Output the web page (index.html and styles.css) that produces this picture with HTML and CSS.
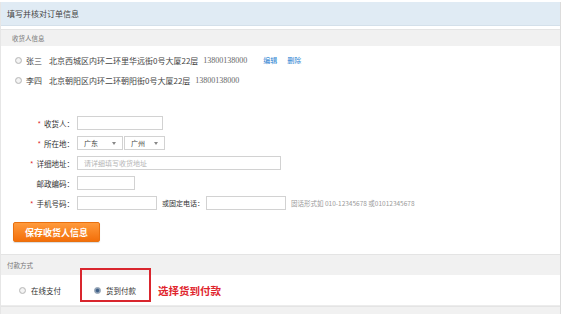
FILE: index.html
```html
<!DOCTYPE html>
<html lang="zh-CN">
<head>
    <meta charset="UTF-8">
    <title>填写并核对订单信息</title>
    <link rel="stylesheet" href="styles.css">
</head>
<body>

<div class="order">
    <div class="order-title">填写并核对订单信息</div>

    <div class="section-title first">收货人信息</div>

    <ul class="address-list">
        <li>
            <span class="radio"></span>
            <span class="name">张三</span>
            <span class="addr">北京西城区内环二环里华远街0号大厦22层</span>
            <span class="phone">13800138000</span>
            <a href="#" class="op">编辑</a>
            <a href="#" class="op">删除</a>
        </li>
        <li>
            <span class="radio"></span>
            <span class="name">李四</span>
            <span class="addr">北京朝阳区内环二环朝阳街0号大厦22层</span>
            <span class="phone">13800138000</span>
        </li>
    </ul>

    <form class="consignee">
        <div class="row">
            <label class="req">收货人：</label>
            <input type="text" class="w-name">
        </div>
        <div class="row">
            <label class="req">所在地：</label>
            <div class="select w-prov">广东<i class="arrow"></i></div>
            <div class="select w-city">广州<i class="arrow"></i></div>
        </div>
        <div class="row">
            <label class="req">详细地址：</label>
            <input type="text" class="w-addr" placeholder="请详细填写收货地址">
        </div>
        <div class="row">
            <label>邮政编码：</label>
            <input type="text" class="w-zip">
        </div>
        <div class="row">
            <label class="req">手机号码：</label>
            <input type="text" class="w-mobile">
            <span class="tel-label">或固定电话：</span>
            <input type="text" class="w-mobile">
            <span class="hint">固话形式如 010-12345678 或01012345678</span>
        </div>
        <button type="button" class="save-btn">保存收货人信息</button>
    </form>

    <div class="section-title pay-title">付款方式</div>

    <div class="pay">
        <span class="pay-item"><span class="radio"></span>在线支付</span>
        <span class="pay-item marked"><span class="radio checked"></span>货到付款</span>
        <span class="pay-note">选择货到付款</span>
    </div>

    <div class="section-title bottom"></div>
</div>

</body>
</html>
```

FILE: styles.css
```css
body {
    margin: 0;
    font-family: "Noto Sans CJK SC", "Liberation Sans", sans-serif;
    background-color: #fff;
    color: #333;
}

.order {
    width: 559px;
    margin-top: 2px;
    border-right: 1px solid #dcdcdc;
    border-left: 1px solid #e6e6e6;
}

.order-title {
    height: 23px;
    line-height: 23px;
    padding-left: 6px;
    font-size: 8px;
    color: #444;
    background-color: #e0ebf4;
    border-bottom: 1px solid #d4e0ea;
}

.section-title {
    height: 16px;
    line-height: 16px;
    padding-left: 11px;
    font-size: 6.5px;
    color: #777;
    background-color: #f1f1f1;
    border-top: 1px solid #e4e4e4;
}

.section-title.first {
    margin-top: 3px;
}

.section-title.pay-title {
    height: 20px;
    line-height: 20px;
    padding-left: 6px;
    margin-top: 12px;
}

.section-title.bottom {
    height: 10px;
}

.radio {
    display: inline-block;
    width: 5px;
    height: 5px;
    border: 1px solid #b8b8b8;
    border-radius: 50%;
    background: radial-gradient(circle, #f4f4f4 40%, #dcdcdc 100%);
    vertical-align: middle;
}

.radio.checked {
    border-color: #8a9aac;
    background: radial-gradient(circle, #3f5f86 35%, #9fb0c4 70%, #dfe5ec 100%);
}

.address-list {
    list-style: none;
    margin: 0;
    padding: 4px 0 0 14px;
}

.address-list li {
    display: flex;
    align-items: center;
    height: 20px;
    font-size: 8px;
    color: #444;
}

.address-list .radio {
    margin-right: 4px;
}

.address-list .name {
    margin-right: 7px;
}

.address-list .addr {
    margin-right: 5px;
}

.address-list .phone {
    font-family: "Liberation Serif", serif;
    font-size: 8px;
    color: #666;
    margin-right: 16px;
}

.address-list .op {
    font-size: 7px;
    color: #2a7fd1;
    text-decoration: none;
    margin-right: 10px;
}

.consignee {
    padding: 23px 0 0 0;
}

.row {
    display: flex;
    align-items: center;
    height: 20px;
    font-size: 7.5px;
}

.row label {
    width: 73px;
    text-align: right;
    color: #333;
    margin-right: 3px;
}

.row label.req::before {
    content: "*";
    color: #e0262c;
    margin-right: 3px;
}

.row input,
.select {
    box-sizing: border-box;
    height: 14px;
    border: 1px solid #d2d2d2;
    padding: 0 6px;
    font-family: inherit;
    font-size: 7px;
    background-color: #fff;
    outline: none;
}

.row input::placeholder {
    color: #b5b5b5;
}

.w-name { width: 86px; }
.w-addr { width: 204px; }
.w-zip { width: 58px; }
.w-mobile { width: 80px; }

.select {
    display: flex;
    align-items: center;
    justify-content: space-between;
    color: #444;
    margin-right: 1px;
}

.w-prov { width: 46px; }
.w-city { width: 41px; }

.arrow {
    width: 0;
    height: 0;
    border-left: 2.5px solid transparent;
    border-right: 2.5px solid transparent;
    border-top: 3px solid #888;
}

.tel-label {
    margin: 0 2px 0 5px;
    font-size: 7px;
    color: #333;
}

.hint {
    margin-left: 5px;
    font-size: 6.5px;
    color: #9a9a9a;
}

.save-btn {
    display: block;
    margin: 9px 0 0 12px;
    width: 87px;
    height: 20px;
    padding: 0;
    border: 1px solid #e8700f;
    border-radius: 2px;
    background: linear-gradient(#ff9a3c, #f36f0a);
    box-shadow: 0 1px 1px rgba(0, 0, 0, 0.15);
    color: #fff;
    font-family: inherit;
    font-size: 9px;
    font-weight: bold;
    cursor: pointer;
}

.pay {
    display: flex;
    align-items: center;
    height: 30px;
    border-bottom: 1px solid #ececec;
    font-size: 7.5px;
    color: #333;
}

.pay-item {
    display: flex;
    align-items: center;
}

.pay-item .radio {
    margin-right: 5px;
}

.pay-item:first-child {
    margin-left: 18px;
}

.pay-item.marked {
    position: relative;
    margin-left: 33px;
}

.pay-item.marked::after {
    content: "";
    position: absolute;
    left: -14px;
    top: -17px;
    width: 67px;
    height: 30px;
    border: 2px solid #d9262e;
}

.pay-note {
    margin-left: 22px;
    font-size: 10.5px;
    font-weight: bold;
    color: #e0242c;
}
```
